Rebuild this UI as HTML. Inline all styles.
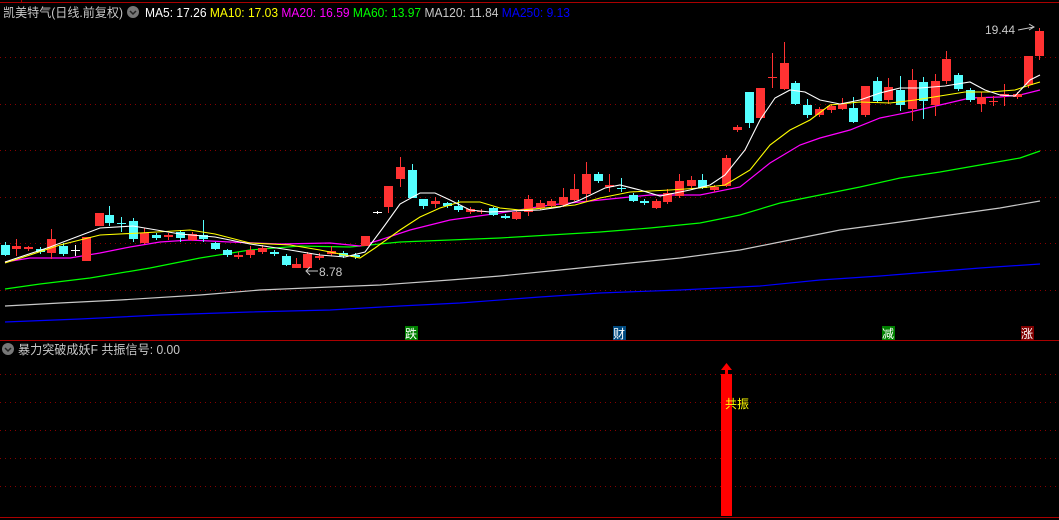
<!DOCTYPE html>
<html><head><meta charset="utf-8"><style>
html,body{margin:0;padding:0;background:#000;width:1059px;height:520px;overflow:hidden}
svg{display:block}
text{font-family:"Liberation Sans","Noto Sans CJK SC",sans-serif}
</style></head><body>
<svg width="1059" height="520" viewBox="0 0 1059 520" xmlns="http://www.w3.org/2000/svg">
<rect width="1059" height="520" fill="#000"/>
<line x1="0" y1="2.5" x2="1059" y2="2.5" stroke="#a00" stroke-width="1"/>
<line x1="21.5" y1="0" x2="21.5" y2="3" stroke="#a00"/>
<g stroke="#800" stroke-dasharray="1 4">
<line x1="0" y1="57.5" x2="1059" y2="57.5"/><line x1="0" y1="104.5" x2="1059" y2="104.5"/>
<line x1="0" y1="150.5" x2="1059" y2="150.5"/><line x1="0" y1="197.5" x2="1059" y2="197.5"/>
<line x1="0" y1="243.5" x2="1059" y2="243.5"/><line x1="0" y1="290.5" x2="1059" y2="290.5"/>
<line x1="0" y1="374.5" x2="1059" y2="374.5"/><line x1="0" y1="402.5" x2="1059" y2="402.5"/>
<line x1="0" y1="430.5" x2="1059" y2="430.5"/><line x1="0" y1="458.5" x2="1059" y2="458.5"/>
<line x1="0" y1="486.5" x2="1059" y2="486.5"/>
</g>
<line x1="0" y1="340.5" x2="1059" y2="340.5" stroke="#a00"/>
<line x1="0" y1="517.5" x2="1059" y2="517.5" stroke="#a00"/>
<g fill="none" stroke-width="1.2">
<polyline stroke="#0000ff" points="5,322 80,319 160,315 250,312 330,310 400,306 460,303 540,297 600,293 680,290 760,286 820,280 880,276 930,272 980,268 1040,264"/>
<polyline stroke="#c8c8c8" points="5,306 60,303 120,300 200,295 260,290 330,287 380,285 450,280 500,276 560,270 620,264 680,258 740,250 790,240 840,230 900,222 950,215 1000,208 1040,201"/>
<polyline stroke="#00ff00" points="5,289 40,284 90,278 150,268 200,258 250,250 300,246 350,247 400,242 450,240 500,238 550,235 600,232 650,228 700,223 740,215 780,203 820,195 860,187 900,178 940,172 980,165 1020,158 1040,151"/>
<polyline stroke="#ff00ff" points="5,262 30,258 70,258 100,253 130,247 160,242 190,240 230,242 280,244 330,243 360,246 380,240 410,230 450,220 500,213 550,205 600,200 650,195 700,195 740,187 770,163 800,145 820,138 850,130 880,118 910,112 940,105 970,98 1000,97 1020,95 1040,90"/>
</g>
<g id="c"></g>
<g fill="none" stroke-width="1.1">
<polyline stroke="#ffff00" points="5,263 30,255 60,245 100,235 140,233 190,230 215,234 250,243 290,245 320,250 360,258 375,248 400,230 420,217 440,208 460,202 480,202 500,208 520,210 545,208 575,205 600,198 630,192 670,190 700,188 725,185 750,170 770,145 790,130 810,120 830,105 860,102 890,103 915,100 940,96 965,92 990,92 1015,90 1030,85 1040,82"/>
<polyline stroke="#ffffff" points="5,262 50,247 100,228 133,226 180,234 215,237 250,244 290,250 320,255 345,257 365,252 385,225 400,204 420,193 435,193 450,200 470,210 490,212 510,211 540,210 560,207 580,200 605,188 620,185 640,190 660,196 690,190 710,185 725,175 745,150 760,120 775,98 790,90 805,92 820,100 840,104 860,100 880,93 900,88 920,88 945,86 970,82 985,90 1000,95 1015,96 1030,80 1040,75"/>
</g>
<text x="985" y="34" fill="#c8c8c8" font-size="12">19.44</text>
<polyline points="1018,30 1034,27" stroke="#c8c8c8" fill="none"/>
<polyline points="1029,24 1034,27 1029,30" stroke="#c8c8c8" fill="none"/>
<text x="319" y="276" fill="#c8c8c8" font-size="12">8.78</text>
<polyline points="307,271 318,271" stroke="#c8c8c8" fill="none"/>
<polyline points="310,267 306,271 310,275" stroke="#c8c8c8" fill="none"/>
<rect x="405" y="326" width="13" height="14" fill="#008000"/><text x="405" y="338" fill="#fff" font-size="12">跌</text>
<rect x="613" y="326" width="13" height="14" fill="#004a80"/><text x="613" y="338" fill="#fff" font-size="12">财</text>
<rect x="882" y="326" width="13" height="14" fill="#008000"/><text x="882" y="338" fill="#fff" font-size="12">减</text>
<rect x="1021" y="326" width="13" height="14" fill="#800000"/><text x="1021" y="338" fill="#fff" font-size="12">涨</text>
<text x="3" y="17" fill="#c8c8c8" font-size="12.5" textLength="120" lengthAdjust="spacingAndGlyphs">凯美特气(日线.前复权)</text>
<circle cx="133" cy="12" r="6" fill="#777"/><polyline points="130,11 133,14 136,11" stroke="#222" stroke-width="1.5" fill="none"/>
<text x="145" y="17" font-size="12.5" textLength="425" lengthAdjust="spacingAndGlyphs"><tspan fill="#fff">MA5: 17.26 </tspan><tspan fill="#ffff00">MA10: 17.03 </tspan><tspan fill="#ff00ff">MA20: 16.59 </tspan><tspan fill="#00ff00">MA60: 13.97 </tspan><tspan fill="#c8c8c8">MA120: 11.84 </tspan><tspan fill="#0000ff">MA250: 9.13</tspan></text>
<circle cx="8" cy="349" r="6" fill="#777"/><polyline points="5,348 8,351 11,348" stroke="#222" stroke-width="1.5" fill="none"/>
<text x="18" y="354" fill="#c8c8c8" font-size="12.5" textLength="162" lengthAdjust="spacingAndGlyphs">暴力突破成妖F  共振信号: 0.00</text>
<rect x="721" y="374" width="11" height="142" fill="#ff0000"/>
<rect x="725" y="367" width="3" height="8" fill="#ff0000"/>
<polygon points="721,370 732,370 726.5,363" fill="#ff0000"/>
<text x="725" y="408" fill="#ffff00" font-size="12">共振</text>
</svg>
<script>
var d=[[5,245,255,242,256,'c'],[16,246,249,239,256,'r'],[28,247,249,246,251,'r'],[40,249,252,247,254,'c'],[51,239,253,229,259,'r'],[63,246,254,243,256,'c'],[75,250,251,245,256,'x'],[86,237,261,237,261,'r'],[99,213,226,213,226,'r'],[109,215,223,206,226,'c'],[121,223,224,217,232,'c'],[133,221,239,218,242,'c'],[144,233,243,228,244,'r'],[156,235,238,233,240,'c'],[168,235,237,233,240,'r'],[180,232,238,230,242,'c'],[192,234,240,232,241,'r'],[203,235,239,220,242,'c'],[215,243,249,242,250,'c'],[227,250,255,249,257,'c'],[238,255,257,252,259,'r'],[250,250,255,246,258,'r'],[262,248,252,245,254,'r'],[274,252,254,250,256,'c'],[286,256,265,254,266,'c'],[296,264,268,258,268,'r'],[307,254,268,252,268,'r'],[319,256,258,253,260,'r'],[331,251,254,246,256,'r'],[343,253,256,251,258,'c'],[355,255,257,253,259,'c'],[365,236,246,236,246,'r'],[377,212,213,211,214,'x'],[388,186,207,186,213,'r'],[400,167,179,157,187,'r'],[412,170,198,164,198,'c'],[423,199,206,199,209,'c'],[435,201,204,197,208,'r'],[447,203,206,202,208,'c'],[458,206,210,200,212,'c'],[470,209,212,207,214,'r'],[481,211,212,209,214,'r'],[493,208,215,207,216,'c'],[505,216,218,214,219,'c'],[516,212,219,210,220,'r'],[528,199,212,195,216,'r'],[540,203,208,200,210,'r'],[551,201,206,199,208,'r'],[563,197,205,188,207,'r'],[574,189,200,174,201,'r'],[586,174,194,162,201,'r'],[598,174,181,172,183,'c'],[609,185,187,174,192,'r'],[621,188,189,178,192,'c'],[633,195,201,193,202,'c'],[644,201,203,199,205,'c'],[656,201,208,199,209,'r'],[667,193,202,189,204,'r'],[679,181,196,174,198,'r'],[691,180,186,176,188,'r'],[702,180,188,174,189,'c'],[714,187,190,185,192,'r'],[726,158,186,155,187,'r'],[737,127,130,125,132,'r'],[749,92,123,92,128,'c'],[760,88,118,88,120,'r'],[772,77,78,53,88,'r'],[784,63,89,42,90,'r'],[795,83,104,81,105,'c'],[807,105,115,99,118,'c'],[819,109,115,107,117,'r'],[831,106,110,104,113,'r'],[842,104,109,98,110,'r'],[853,108,122,97,123,'c'],[865,86,115,86,117,'r'],[877,81,101,77,103,'c'],[888,87,100,78,104,'r'],[900,90,105,76,111,'c'],[912,80,109,69,121,'r'],[923,82,101,77,119,'c'],[935,81,105,74,116,'r'],[946,59,81,51,84,'r'],[958,75,89,73,91,'c'],[970,90,100,88,102,'c'],[981,97,104,92,112,'r'],[993,101,102,96,106,'x'],[1004,94,96,84,106,'r'],[1017,94,97,92,99,'r'],[1028,56,85,56,88,'r'],[1039,31,56,28,60,'r']];
var s='';d.forEach(function(c){var col=c[5]=='c'?'#54ffff':(c[5]=='x'?'#ffffff':'#ff3232');if(c[5]=='x'&&c[0]>700)col='#ff3232';
s+='<line x1="'+(c[0]+.5)+'" y1="'+c[3]+'" x2="'+(c[0]+.5)+'" y2="'+c[4]+'" stroke="'+col+'"/>';
var h=Math.max(1,c[2]-c[1]);s+='<rect x="'+(c[0]-4)+'" y="'+c[1]+'" width="9" height="'+h+'" fill="'+col+'"/>';});
document.getElementById('c').innerHTML=s;
</script>
</body></html>
